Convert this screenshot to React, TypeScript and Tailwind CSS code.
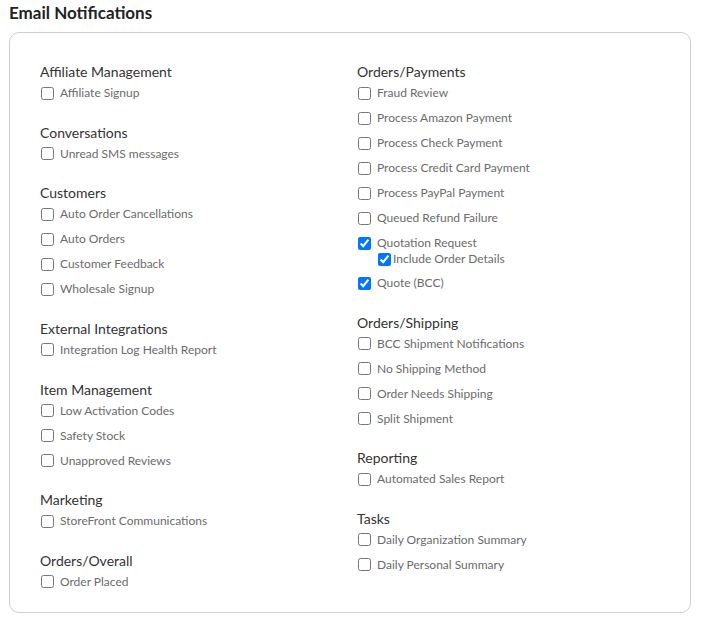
import type { ReactNode } from 'react'

type Item = { label: string; checked?: boolean; sub?: { label: string; checked?: boolean } }
type Section = { title: string; items: Item[] }

const LEFT: Section[] = [
  { title: 'Affiliate Management', items: [{ label: 'Affiliate Signup' }] },
  { title: 'Conversations', items: [{ label: 'Unread SMS messages' }] },
  {
    title: 'Customers',
    items: [
      { label: 'Auto Order Cancellations' },
      { label: 'Auto Orders' },
      { label: 'Customer Feedback' },
      { label: 'Wholesale Signup' },
    ],
  },
  { title: 'External Integrations', items: [{ label: 'Integration Log Health Report' }] },
  {
    title: 'Item Management',
    items: [{ label: 'Low Activation Codes' }, { label: 'Safety Stock' }, { label: 'Unapproved Reviews' }],
  },
  { title: 'Marketing', items: [{ label: 'StoreFront Communications' }] },
  { title: 'Orders/Overall', items: [{ label: 'Order Placed' }] },
]

const RIGHT: Section[] = [
  {
    title: 'Orders/Payments',
    items: [
      { label: 'Fraud Review' },
      { label: 'Process Amazon Payment' },
      { label: 'Process Check Payment' },
      { label: 'Process Credit Card Payment' },
      { label: 'Process PayPal Payment' },
      { label: 'Queued Refund Failure' },
      { label: 'Quotation Request', checked: true, sub: { label: 'Include Order Details', checked: true } },
      { label: 'Quote (BCC)', checked: true },
    ],
  },
  {
    title: 'Orders/Shipping',
    items: [
      { label: 'BCC Shipment Notifications' },
      { label: 'No Shipping Method' },
      { label: 'Order Needs Shipping' },
      { label: 'Split Shipment' },
    ],
  },
  { title: 'Reporting', items: [{ label: 'Automated Sales Report' }] },
  { title: 'Tasks', items: [{ label: 'Daily Organization Summary' }, { label: 'Daily Personal Summary' }] },
]

function Box({ checked }: { checked?: boolean }) {
  return (
    <input
      type="checkbox"
      defaultChecked={checked}
      className="m-0 w-[13px] h-[13px] shrink-0 accent-[#0075ff]"
    />
  )
}

function Row({ children, className = '' }: { children: ReactNode; className?: string }) {
  return <label className={`flex items-center text-[12px] text-[#6b6b6b] ${className}`}>{children}</label>
}

function Group({ section }: { section: Section }) {
  return (
    <div className="mb-[20.65px]">
      <h3 className="text-[14px] leading-[20px] text-[#333]">{section.title}</h3>
      {section.items.map((item, i) => (
        <div key={item.label} className={i > 0 ? 'mt-[5px]' : ''}>
          <Row className="h-[20px] pt-[2px] gap-[6px] pl-px">
            <Box checked={item.checked} />
            <span>{item.label}</span>
          </Row>
          {item.sub && (
            <Row className="h-[16px] -mt-[1px] mb-[4px] pl-[21px] gap-[2px]">
              <Box checked={item.sub.checked} />
              <span>{item.sub.label}</span>
            </Row>
          )}
        </div>
      ))}
    </div>
  )
}

export default function App() {
  return (
    <div className="bg-white min-h-screen pl-[9px] pt-px" style={{ fontFamily: 'Lato, "Noto Sans", sans-serif' }}>
      <h2 className="text-[17px] leading-[24px] font-bold text-[#222]">Email Notifications</h2>
      <div className="mt-[7px] w-[682px] border border-[#cfcfcf] rounded-[10px] pl-[30px] pr-[30px] pt-[29px] pb-px">
        <div className="grid grid-cols-[317px_1fr]">
          <div>
            {LEFT.map(s => <Group key={s.title} section={s} />)}
          </div>
          <div>
            {RIGHT.map(s => <Group key={s.title} section={s} />)}
          </div>
        </div>
      </div>
    </div>
  )
}
